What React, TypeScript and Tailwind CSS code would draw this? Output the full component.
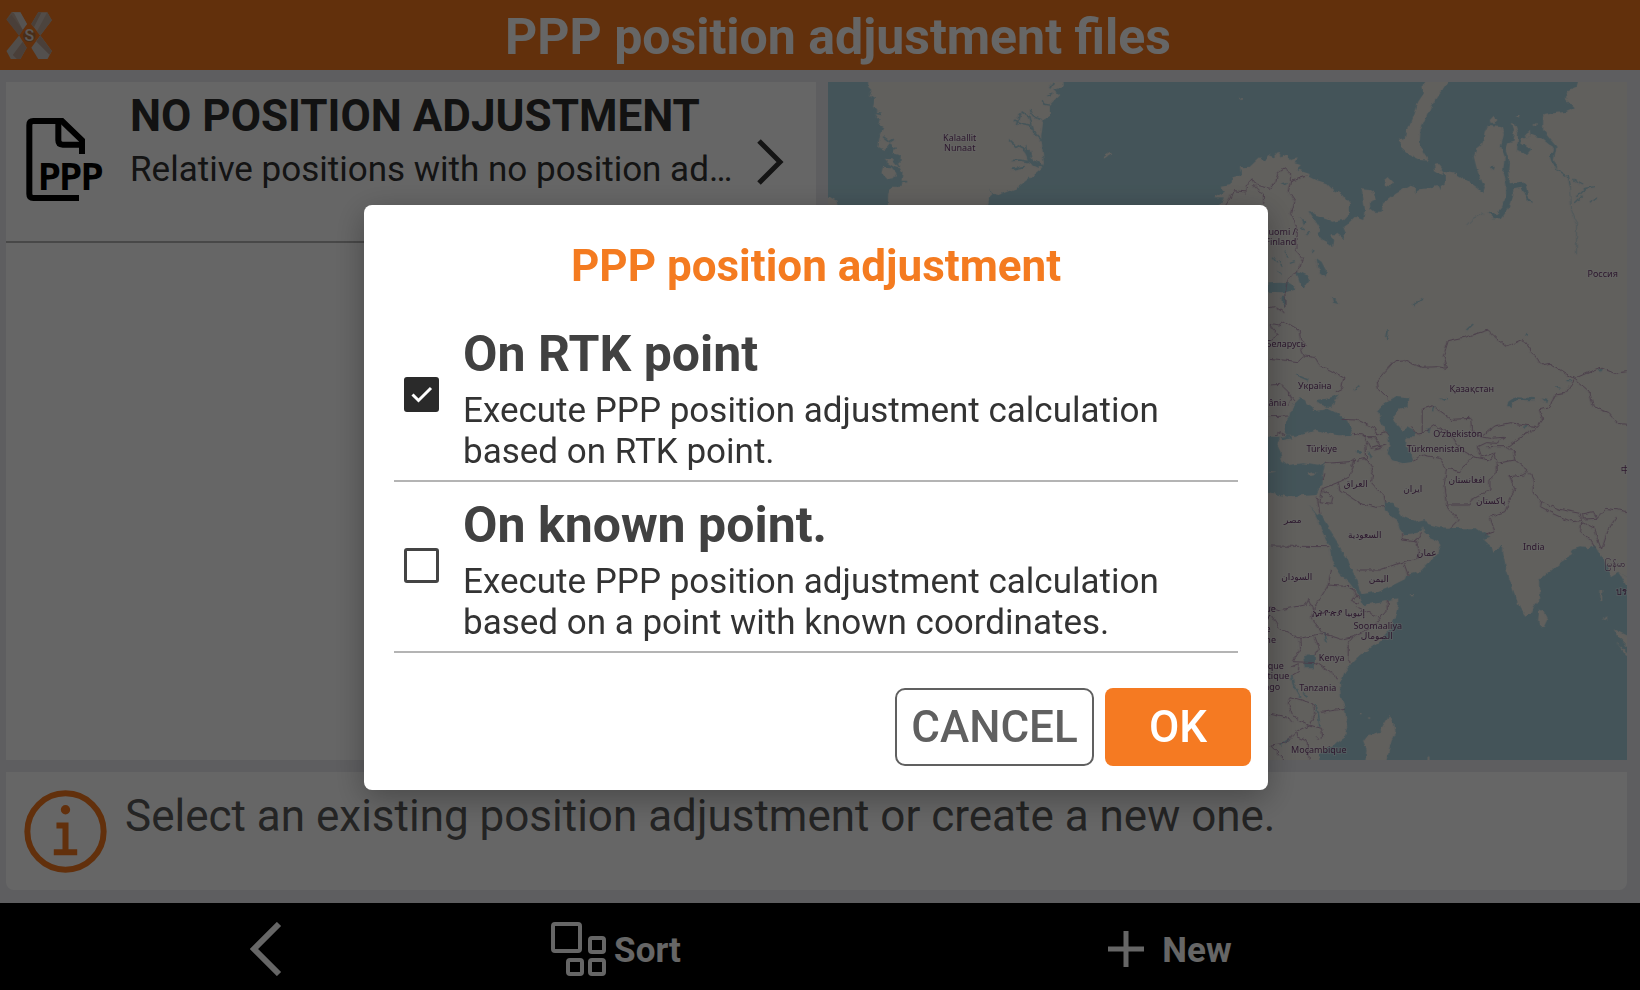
import { useState } from "react";

type Label = { x: number; y: number; text: string };

const mapLabels: Label[] = [
  { x: 960, y: 141, text: "Kalaallit" },
  { x: 960, y: 151, text: "Nunaat" },
  { x: 1280, y: 235, text: "Suomi /" },
  { x: 1281, y: 245, text: "Finland" },
  { x: 1603, y: 277, text: "Россия" },
  { x: 1286, y: 347, text: "Беларусь" },
  { x: 1315, y: 389, text: "Україна" },
  { x: 1268, y: 406, text: "România" },
  { x: 1472, y: 392, text: "Қазақстан" },
  { x: 1458, y: 437, text: "Oʻzbekiston" },
  { x: 1436, y: 452, text: "Türkmenistan" },
  { x: 1322, y: 452, text: "Türkiye" },
  { x: 1356, y: 487, text: "العراق" },
  { x: 1413, y: 492, text: "ایران" },
  { x: 1467, y: 483, text: "افغانستان" },
  { x: 1491, y: 504, text: "پاکستان" },
  { x: 1293, y: 523, text: "مصر" },
  { x: 1365, y: 538, text: "السعودية" },
  { x: 1427, y: 556, text: "عمان" },
  { x: 1534, y: 550, text: "India" },
  { x: 1297, y: 580, text: "السودان" },
  { x: 1379, y: 582, text: "اليمن" },
  { x: 1339, y: 616, text: "ኢትዮጵያ إثيوبيا" },
  { x: 1378, y: 629, text: "Soomaaliya" },
  { x: 1377, y: 639, text: "الصومال" },
  { x: 1332, y: 661, text: "Kenya" },
  { x: 1318, y: 691, text: "Tanzania" },
  { x: 1319, y: 753, text: "Moçambique" },
  { x: 1615, y: 567, text: "မြန်မာ" },
  { x: 1632, y: 595, text: "ประเทศ" },
  { x: 1630, y: 473, text: "中国" },
  { x: 1252, y: 612, text: "République" },
  { x: 1262, y: 622, text: "ne /" },
  { x: 1262, y: 632, text: "ntre" },
  { x: 1258, y: 643, text: "africaine" },
  { x: 1260, y: 669, text: "République" },
  { x: 1260, y: 679, text: "démocratique" },
  { x: 1260, y: 690, text: "du Congo" },
];

function WorldMap() {
  return (
    <svg
      className="absolute inset-0 size-full"
      viewBox="828 82 799 678"
      preserveAspectRatio="xMidYMid slice"
      role="img"
      aria-label="World map"
    >
      <defs>
        <filter id="coast" x="0" y="0" width="100%" height="100%" colorInterpolationFilters="sRGB">
          <feTurbulence type="fractalNoise" baseFrequency="0.16" numOctaves="2" seed="4" />
          <feDisplacementMap in="SourceGraphic" scale="5" xChannelSelector="R" yChannelSelector="G" />
        </filter>
      </defs>
      <rect x="800" y="60" width="860" height="720" fill="#aad3df" />
      <g filter="url(#coast)">
        {/* Greenland */}
        <g transform="translate(820 70) scale(.33333)">
          <path
            fill="#f2efe9"
            d="M145 10V50L155 60L150 75L165 85L160 110L172 125L168 140L182 150L178 165L190 172L180 200L175 230L195 240L212 220L225 235L220 250L240 255L238 290L248 310L243 350L215 350L205 375L203 440H495L505 385L518 372L508 355L528 378L590 355L640 315L668 292L672 280L664 200L670 155L690 130L690 105L718 75L700 60L735 50L732 10Z"
          />
          <path fill="#f2efe9" d="M192 266L215 268L230 285L245 295L225 292L205 280ZM190 290L215 292L230 310L222 325L200 328L185 312ZM20 375L50 392L56 420H20Z" />
          <path
            fill="none"
            stroke="#aad3df"
            strokeWidth="5"
            d="M670 290L640 285L625 265L615 240L590 228L568 208M625 275L600 270L575 272M615 290L575 298M625 250L620 225M665 210L645 190L628 165L605 160L585 150M640 180L630 140L605 125M668 150L640 140L632 120M600 130L590 165M690 105L672 102L668 90M700 70L680 78M700 36L690 55M185 130L160 125M190 200L210 215L222 208M230 230L205 245M240 290L215 262M262 335L240 335"
          />
          <path fill="none" stroke="#aad3df" strokeWidth="14" d="M622 240L630 270L660 288" />
          <path fill="none" stroke="#f2efe9" strokeWidth="6" d="M854 263L872 251M1261 86h8" />
        </g>

        {/* Scandinavia, Russian Arctic coast and Siberia */}
        <g transform="translate(1200 70) scale(.33333)">
          <path
            fill="#f2efe9"
            d="M-60 480L60 403L72 385L40 385L75 365L62 350L95 345L98 322L125 315L120 292L150 290L180 262L195 270L205 255L222 262L235 248L245 262L262 252L270 268L290 262L285 280L303 285L290 297L325 308L330 320L350 330L380 340L400 360L430 375L450 400L450 430L430 450L400 455L380 445L350 435L325 420L345 450L360 475L355 490L365 510L385 520L400 532L403 510L390 490L410 490L430 505L438 490L430 470L445 460L465 440L490 450L495 420L490 380L485 358L510 360L525 370L530 388L510 395L512 415L525 425L545 425L550 400L590 370L630 347L645 350L645 372L655 358L690 355L710 345L722 365L720 350L735 340L735 305L770 312L800 330L835 355L850 370L855 355L845 335L832 300L822 260L830 235L848 220L855 185L865 165L905 168L912 190L903 230L915 260L910 300L920 345L918 380L905 415L890 432L860 427L880 445L905 445L930 410L940 380L940 355L965 350L975 370L985 395L997 398L985 380L980 350L965 335L930 340L925 310L928 270L918 240L925 220L940 215L945 190L933 158L948 165L955 190L952 240L985 252L995 240L965 220L965 208L1000 195L1025 205L1050 225L1060 240L1050 260L1060 290L1075 300L1062 270L1070 230L1045 200L1030 180L1030 135L1060 130L1100 125L1125 115L1095 85L1105 60L1130 50L1142 10H1400V900H-60Z"
          />
          <path fill="#f2efe9" d="M685 10L668 50L672 70L655 95L645 130L635 155L620 180L615 205L602 208L603 230L630 255L660 270L688 272L670 245L660 215L662 180L680 140L695 105L715 75L745 36L760 10Z" />
          <path fill="#f2efe9" d="M553 330L565 320L580 335L568 352L556 348ZM870 150L882 137L893 150L885 158H872ZM703 285L715 282L735 305L728 315L705 300ZM975 190L990 180L992 198L978 203ZM1000 165L1010 158L1010 170ZM950 135h12v4h-12Z" />
          <path fill="#aad3df" d="M203 640L240 638L270 640L290 655L250 667L203 665ZM287 600L320 615L328 630L312 655L300 640ZM350 565L365 575L378 600L375 620L358 605ZM395 680L410 690L415 702L400 698ZM245 680L256 680L256 712L246 700ZM245 340L265 335L258 345ZM872 292L885 290L882 300ZM335 540L345 545L340 550ZM300 440L320 460L310 465Z" />
          <path
            fill="none"
            stroke="#aad3df"
            strokeWidth="4"
            d="M220 560L235 580M230 600L245 610M255 545L265 560M270 580L285 575M240 570L250 590M300 470L315 480M320 495L330 485M1125 400L1150 375M1130 380L1155 355L1185 350M1170 400L1195 380M1120 330L1150 345M1075 300L1105 320L1112 350M500 735L530 740M640 705L670 685"
          />
          <path fill="none" stroke="#aad3df" strokeWidth="2" d="M1112 350L1115 420L1130 460L1130 550M800 465L820 445L850 430" />
          <path
            fill="none"
            stroke="#bc9cba"
            strokeWidth="3"
            d="M75 410L90 385L100 362L138 366L140 345L157 326L170 345L210 355L228 335L235 305L255 293L272 305L272 335L320 318M160 345L190 375L192 403M272 335L265 365L285 395L275 430L290 470L288 540L308 565L300 590L262 635L255 670L255 710M205 715L225 710L248 725L257 755L240 770L205 755M257 755L300 775"
          />
        </g>

        {/* Central Asia, Middle East, Africa and the Indian Ocean */}
        <g transform="translate(1260 320) scale(.33333)">
          <path fill="#f2efe9" d="M-400 -20H1160V1360H-400Z" />
          <path
            fill="#aad3df"
            d="M145 550L165 580L180 620L195 650L210 680L215 720L240 760L270 790L300 830L310 855L340 850L380 840L415 835L415 855L405 895L390 930L360 965L300 1005L275 1030L255 1055L240 1090L243 1130L255 1160L262 1220L255 1250L220 1275L180 1300L175 1360H1160V770H1101L1075 755L1050 770L1040 735L1020 700L1005 675L985 685L960 682L935 690L940 705L905 725L870 755L838 780L838 840L822 860L815 880L800 890L780 865L760 810L740 750L730 700V675L720 680L700 695L695 680L670 657L692 650L665 635L650 625L600 625L540 622L505 612L495 597L465 605L430 590L412 565L400 548L372 548L380 570L395 590L410 600L420 625L430 643L465 640L485 635L490 618L495 645L530 660L542 675L530 705L510 725L495 740L480 755L440 765L435 778L400 795L350 815L305 823L300 810L290 780L275 750L265 720L250 700L235 670L215 640L205 615L180 580L172 585Z"
          />
          <path fill="#f2efe9" d="M1101 770L1120 740V840L1101 800L1075 755Z" />
          <path
            fill="#f2efe9"
            d="M838 865L850 870L865 900L855 920L840 922L835 900ZM388 1187L400 1210L405 1240L395 1260L385 1300L375 1340H315L320 1290L310 1265L325 1245L360 1235L375 1210ZM1058 925L1120 955V1000L1080 955ZM410 610L418 615L416 628L410 622ZM448 822h14v4h-14ZM300 1180h5v6h-5ZM325 1192h6v4h-6ZM506 1310h6v8h-6ZM1068 965L1105 1000L1100 1005ZM1022 810h5v30h-5ZM1034 890h5v12h-5Z"
          />
          <path fill="#aad3df" d="M75 340L75 310L90 290L100 255L120 235L135 240L140 250L155 258L160 273L190 270L205 265L235 280L265 305L278 330L270 346L240 346L200 340L170 330L140 340L110 347L80 347Z" />
          <path fill="#aad3df" d="M172 240L205 235L240 223L225 240L218 260L200 260L180 252Z" />
          <path fill="#aad3df" d="M355 275L375 250L410 228L445 232L443 260L415 270L400 290L410 310L430 335L442 322L465 335L465 352L440 352L438 380L455 400L460 425L430 430L395 420L383 400L390 370L385 350L365 310Z" />
          <path fill="#aad3df" d="M-120 350L60 350L50 370L62 395L65 420L85 435L130 430L175 437L195 430L190 460L188 490L170 525L130 528L100 532L60 525L26 515H-120ZM62 350L90 347L95 355L70 360Z" />
          <path fill="#f2efe9" d="M140 462L160 456L170 454L160 466L148 468ZM26 455L50 458L28 462Z" />
          <path fill="#aad3df" d="M742 262L745 245L765 232L825 234V241L775 240L758 248L755 262ZM782 320L812 316L795 326ZM130 1010L148 1003L165 1006L165 1045L135 1045ZM845 235L865 240L862 250ZM540 235L565 238L555 243ZM885 195L905 205L900 210ZM1015 145L1030 148L1025 158ZM500 325L512 325L510 335L500 335ZM920 180h14v4h-14ZM325 395L335 405L333 418ZM288 390h16v8h-16Z" />
          <path
            fill="none"
            stroke="#aad3df"
            strokeWidth="5"
            d="M96 1065L100 1095L120 1130M165 1150L175 1180L180 1220M195 940L202 968M65 1275L90 1255M145 315L150 320M110 165L145 180M380 60L385 30M285 210L300 195M520 275L525 258M130 1120L145 1130M795 45L805 40M640 12L620 30"
          />
          <path
            fill="none"
            stroke="#bc9cba"
            strokeWidth="3"
            d="M30 10L55 15L75 5L118 30L122 60L140 75L125 90L133 108L115 125L30 115M133 108L165 112L180 135L210 150L252 172L245 205L225 215M30 15L55 45L30 62M30 195L62 193L85 215L105 240M85 215L95 240L85 260M30 290L88 288M45 345L62 335L75 345"
          />
          <path
            fill="none"
            stroke="#bc9cba"
            strokeWidth="3"
            d="M388 238L355 205L352 180L375 155L405 122L430 120L485 142L535 140L560 145L550 110L565 62L620 50L685 30L705 50L742 80L790 58L845 135L870 130L920 162L945 175L1020 142L1065 160L1101 155M945 175L915 220L885 225L870 262L840 270L848 300L830 325L790 345L745 380L760 395L765 420L805 450L820 480V520L850 548L900 568L960 580L965 605M945 178L990 215L1000 260L1050 280L1075 310L1101 313M845 545L842 560L880 580L935 605L960 602M968 582L1000 575L1012 595L970 597ZM1012 595L1040 565L1075 570L1101 575M965 605L962 640L990 655L1003 680M965 605L1005 625L1010 650L1025 690L1045 630L1070 590"
          />
          <path
            fill="none"
            stroke="#bc9cba"
            strokeWidth="3"
            d="M487 340V268L520 257L575 298L632 295L635 330L665 350L705 318L750 308L830 320M487 340L470 342L455 322M487 340L525 315L550 330L575 345L600 385L640 408M660 350L690 355L735 352L710 370L680 368L655 380L665 410L700 400M680 380L745 380M460 420L490 405L540 415L560 445L600 455L640 410L690 420L705 398L712 430L765 420M560 445L552 500L560 555L595 600L570 625M560 555L630 555L640 535L690 510L690 480L712 460V430M805 450L790 465L750 470L765 505L735 575L690 590L705 635L675 645"
          />
          <path
            fill="none"
            stroke="#bc9cba"
            strokeWidth="3"
            d="M245 298L290 300L345 325L350 345L375 335L385 345M278 340L310 345L330 385L380 375M308 350L345 350L365 385L345 390M318 375L320 415L340 450L335 485L370 525L375 550M195 430L270 425L320 415M270 425L285 415M270 470L240 485L190 505L180 545L215 550L220 530L190 515M270 470L285 420M195 460L190 480M235 485L240 510L300 550L350 562L375 560M425 640L428 660L470 665L485 640M470 665L480 700M172 530L180 580M30 678L205 680"
          />
          <path
            fill="none"
            stroke="#bc9cba"
            strokeWidth="3"
            d="M215 745L205 795L270 800L300 835M295 750L360 750L430 725L470 715L480 690M430 725L445 765M205 795L160 870L145 835L135 855L60 870L30 860M160 870L155 895L190 940L245 958L280 950L340 920L362 893L382 870V840M300 850L278 845L290 825M290 860L362 893M280 950L265 970V1020L275 1030M190 940L120 955L60 925L30 880M165 950L178 985L165 1005M120 955L122 985L100 1025L170 1028L235 1075M95 1040L118 1030L115 1055L98 1065M85 1150L90 1130L160 1150L165 1180L148 1215L100 1190L85 1150M178 1178L258 1165M148 1215L108 1235L110 1250L145 1265L148 1320M148 1215L185 1225L188 1250L170 1255M30 1180L75 1190L100 1205M30 1275L75 1270L110 1235M30 1275L75 1320"
          />
        </g>
      </g>
      <g
        fill="#713f74"
        stroke="#ffffff"
        strokeOpacity=".35"
        strokeWidth="2"
        paintOrder="stroke"
        textAnchor="middle"
        className="font-['Noto_Sans','DejaVu_Sans','Noto_Sans_CJK_SC',sans-serif] text-[9px]"
      >
        {mapLabels.map((label) => (
          <text key={`${label.x}-${label.y}`} x={label.x} y={label.y}>
            {label.text}
          </text>
        ))}
      </g>
    </svg>
  );
}

function Logo() {
  return (
    <svg className="h-[47px] w-[46px] shrink-0" viewBox="18 32 138 142" aria-hidden="true">
      <path fill="#c3ab9c" d="M34 33H61L81 68L57 103L19 55Z" />
      <path fill="#d8d0ca" d="M34 33H61L81 68L68 86L42 36Z" />
      <path fill="#b89f8e" d="M19 55L34 40L68 86L57 103Z" />
      <path fill="#cdbfb5" d="M115 33H142L156 57L121 103L94 68Z" />
      <path fill="#b8a08f" d="M94 68L115 33L125 33L102 78Z" />
      <path fill="#bfaa9c" d="M142 33L156 57L121 103L111 90Z" />
      <path fill="#cbc1ba" d="M57 103L19 150L32 174H61L80 140Z" />
      <path fill="#b89f8e" d="M68 122L80 140L61 174H50L38 162Z" />
      <path fill="#d0c8c2" d="M121 103L156 150L143 174H115L94 140Z" />
      <path fill="#b89f8e" d="M121 103L156 150L149 161L109 121Z" />
      <circle cx="88" cy="104" r="19" fill="#b5723f" />
      <text x="88" y="121" textAnchor="middle" fill="#e4dcd6" className="font-['Roboto',sans-serif] text-[48px] font-medium">
        S
      </text>
    </svg>
  );
}

function PppFileIcon() {
  return (
    <svg className="h-[83px] w-[78px] shrink-0" viewBox="77 357 234 249" aria-hidden="true">
      <g fill="none" stroke="#000" strokeWidth="18">
        <path d="M236 597H99Q87 597 87 585V378Q87 366 99 366H185L245 424V465" />
        <path d="M174 366V424Q174 437 187 437H245" />
      </g>
      <text x="113 177 241" y="573" className="font-['DejaVu_Sans_Mono',monospace] text-[114px] font-bold">
        PPP
      </text>
    </svg>
  );
}

function InfoIcon() {
  return (
    <svg className="size-[83px] shrink-0" viewBox="72 120 248 248" fill="none" stroke="#f47920" strokeWidth="18" aria-hidden="true">
      <circle cx="196" cy="244" r="114" />
      <path d="M169 226H196V306M161 306H231" />
      <circle cx="196" cy="179" r="14" fill="#f47920" stroke="none" />
    </svg>
  );
}

type OptionProps = {
  id: string;
  title: string;
  description: string;
  checked: boolean;
  onChange: () => void;
};

function Option({ id, title, description, checked, onChange }: OptionProps) {
  return (
    <li className="flex items-center gap-6 border-b-2 border-[#b4b4b4] pt-[15px] pr-10 pb-2 pl-2.5">
      <span className="relative mb-2 size-[35px] shrink-0">
        <input
          id={id}
          type="checkbox"
          checked={checked}
          onChange={onChange}
          aria-describedby={`${id}-description`}
          className="block size-full appearance-none rounded-[3px] border-3 border-[#444] bg-white checked:border-[#2a2a2a] checked:bg-[#2a2a2a]"
        />
        {checked && (
          <svg className="pointer-events-none absolute inset-0 size-full" viewBox="0 0 35 35" fill="none" stroke="#fff" strokeWidth="3" aria-hidden="true">
            <path d="M8.500 17.500L14.500 23.500L27 11" />
          </svg>
        )}
      </span>
      <div className="flex flex-col gap-2">
        <label htmlFor={id} className="text-[50px] leading-14 font-bold text-[#414141]">
          {title}
        </label>
        <p id={`${id}-description`} className="text-[35px] leading-[41px] text-[#333]">
          {description}
        </p>
      </div>
    </li>
  );
}

export default function App() {
  const [choice, setChoice] = useState<"rtk" | "known">("rtk");

  return (
    <div className="flex min-h-screen flex-col bg-[#ebebf0] font-['Roboto',sans-serif]">
      <header className="flex h-[70px] items-center bg-[#f47920] pr-4 pl-1.5">
        <Logo />
        <h1 className="flex-1 pt-1 text-center text-[50px] leading-[60px] font-bold text-white">PPP position adjustment files</h1>
      </header>

      <main className="flex flex-1 flex-col gap-3 pt-3 pr-[13px] pb-[13px] pl-1.5">
        <div className="grid flex-1 grid-cols-[811fr_799fr] gap-3">
          <section className="min-w-0 bg-white">
            <a href="#no-adjustment" className="flex h-[161px] items-start gap-5 border-b-2 border-[#b4b4b4] pr-8 pl-5">
              <span className="mt-9 mr-1.5">
                <PppFileIcon />
              </span>
              <span className="flex min-w-0 flex-1 flex-col pt-2">
                <span className="text-[44px] leading-[52px] font-bold text-[#2d2d2d]">NO POSITION ADJUSTMENT</span>
                <span className="truncate text-[35px] leading-[55px] text-[#333]">Relative positions with no position adjustment</span>
              </span>
              <svg className="mt-[57px] h-[46px] w-[27px] shrink-0" viewBox="0 0 27 46" fill="none" stroke="#333" strokeWidth="5" aria-hidden="true">
                <path d="M2 2L23 23L2 44" />
              </svg>
            </a>
          </section>
          <section className="relative overflow-hidden">
            <WorldMap />
          </section>
        </div>
        <section className="flex min-h-[118px] items-start gap-[18px] rounded-b-lg bg-white pt-[18px] pl-[18px]">
          <InfoIcon />
          <p className="text-[44px] leading-[53px] text-[#5a5a5a]">Select an existing position adjustment or create a new one.</p>
        </section>
      </main>

      <nav className="grid h-[87px] grid-cols-[532fr_168fr_940fr] bg-black pt-1 text-[35px] font-bold text-white">
        <button type="button" aria-label="Back" className="flex items-center justify-center">
          <svg className="h-[54px] w-8" viewBox="0 0 32 54" fill="none" stroke="#fff" strokeWidth="6" aria-hidden="true">
            <path d="M29 2L4 27L29 52" />
          </svg>
        </button>
        <button type="button" className="flex items-center justify-center gap-2">
          <svg className="h-[54px] w-[55px]" viewBox="0 0 55 54" fill="none" stroke="#fff" strokeWidth="4" aria-hidden="true">
            <rect x="2" y="2" width="27" height="27" rx="2" />
            <rect x="39" y="16" width="14" height="14" rx="2" />
            <rect x="17" y="38" width="14" height="14" rx="2" />
            <rect x="39" y="38" width="14" height="14" rx="2" />
          </svg>
          <span className="pt-1.5">Sort</span>
        </button>
        <button type="button" className="flex items-center justify-center gap-[18px]">
          <svg className="size-9" viewBox="0 0 36 36" fill="none" stroke="#fff" strokeWidth="5" aria-hidden="true">
            <path d="M18 0V36M0 18H36" />
          </svg>
          <span className="pt-1.5">New</span>
        </button>
      </nav>

      <div className="fixed inset-0 flex items-center justify-center bg-black/60 pt-1 pr-2">
        <div
          role="dialog"
          aria-modal="true"
          aria-labelledby="dialog-title"
          className="flex w-full max-w-[904px] flex-col rounded-lg bg-white pt-[33px] pb-6 shadow-[0_8px_32px_rgba(0,0,0,0.3)]"
        >
          <h2 id="dialog-title" className="text-center text-[44px] leading-14 font-bold text-[#f47b20]">
            PPP position adjustment
          </h2>
          <ul className="mx-[30px] mt-[17px]">
            <Option
              id="on-rtk"
              title="On RTK point"
              description="Execute PPP position adjustment calculation based on RTK point."
              checked={choice === "rtk"}
              onChange={() => setChoice("rtk")}
            />
            <Option
              id="on-known"
              title="On known point."
              description="Execute PPP position adjustment calculation based on a point with known coordinates."
              checked={choice === "known"}
              onChange={() => setChoice("known")}
            />
          </ul>
          <div className="mt-[35px] mr-[17px] flex justify-end gap-[11px] text-[44px] leading-[52px] font-medium">
            <button type="button" className="h-[78px] w-[199px] rounded-[10px] border-2 border-[#606060] text-[#606060]">
              CANCEL
            </button>
            <button type="button" className="h-[78px] w-[146px] rounded-lg bg-[#f57a22] text-white">
              OK
            </button>
          </div>
        </div>
      </div>
    </div>
  );
}
